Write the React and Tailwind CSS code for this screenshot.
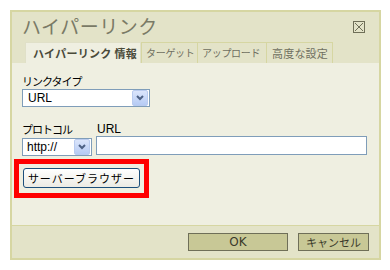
import React from "react";

const jp = { fontFamily: '"Noto Sans CJK JP", "Noto Sans", sans-serif' };

function Arrow() {
  return (
    <div className="w-[16px] h-[16px] rounded-[2px] border border-[#b9cbef] bg-gradient-to-b from-[#dbe5fb] to-[#b6cbf4] flex items-center justify-center">
      <svg width="8" height="6" viewBox="0 0 8 6">
        <path d="M1 1 L4 4 L7 1" stroke="#4d6185" strokeWidth="2" fill="none" />
      </svg>
    </div>
  );
}

export default function App() {
  return (
    <div className="w-[390px] h-[270px] bg-white pt-[10px] pl-[10px]" style={jp}>
      <div className="w-[371px] h-[250px] border-2 border-[#d6d6a2] bg-[#e3e3c8] flex flex-col">
        {/* header */}
        <div className="h-[30px] flex items-start justify-between pl-[10px] pr-[14px]">
          <div className="text-[19px] leading-none mt-[4px] text-[#7a7a66] tracking-[0.5px] whitespace-nowrap">ハイパーリンク</div>
          <div className="mt-[9px] w-[12px] h-[12px] border border-[#6f6f58] flex items-center justify-center">
            <svg width="10" height="10" viewBox="0 0 10 10">
              <path d="M1 1 L9 9 M9 1 L1 9" stroke="#6f6f58" strokeWidth="1" />
            </svg>
          </div>
        </div>
        {/* tabs */}
        <div className="h-[21px] flex items-end pl-[13px] text-[11px] leading-none whitespace-nowrap">
          <div className="flex-none h-[21px] w-[116px] bg-[#efefe1] border-l border-t border-r border-[#e0e0c8] flex items-center pl-[7px] font-bold text-[#4a4a3a] tracking-[0.3px]">
            ハイパーリンク 情報
          </div>
          <div className="flex-none h-[21px] w-[57px] border border-b-0 border-[#d6d6a2] flex items-center pl-[4px] text-[10px] text-[#6f6f60] tracking-[-0.3px]">ターゲット</div>
          <div className="flex-none h-[21px] w-[69px] border border-l-0 border-b-0 border-[#d6d6a2] flex items-center pl-[4px] text-[10px] text-[#6f6f60] tracking-[-0.3px]">アップロード</div>
          <div className="flex-none h-[21px] w-[66px] border border-l-0 border-b-0 border-[#d6d6a2] flex items-center pl-[5px] text-[11px] text-[#6f6f60] tracking-[0.2px]">高度な設定</div>
        </div>
        {/* content */}
        <div className="flex-1 bg-[#efefe1] border-b border-[#d6d6a2] pl-[10px] pt-[12px] text-black">
          <div className="text-[11px] leading-[13px] tracking-[-1px]">リンクタイプ</div>
          <div className="mt-[1px] w-[128px] h-[18px] bg-white border border-[#7f9db9] flex items-center justify-between pl-[5px] pr-[1px]">
            <span className="text-[12px] leading-none" style={{ fontFamily: '"Liberation Sans", sans-serif' }}>URL</span>
            <Arrow />
          </div>
          <div className="mt-[16px] flex gap-[4px]">
            <div className="flex flex-col">
              <div className="text-[11px] leading-[13px] tracking-[-1px] h-[14px]">プロトコル</div>
              <div className="mt-[1px] w-[70px] h-[18px] bg-white border border-[#7f9db9] flex items-center justify-between pl-[4px] pr-[1px]">
                <span className="text-[12px] leading-none" style={{ fontFamily: '"Liberation Sans", sans-serif' }}>http://</span>
                <Arrow />
              </div>
            </div>
            <div className="flex flex-col">
              <div className="text-[12px] leading-[13px] h-[13px] pl-[1px]" style={{ fontFamily: '"Liberation Sans", sans-serif' }}>URL</div>
              <div className="w-[271px] h-[19px] bg-white border border-[#7f9db9]"></div>
            </div>
          </div>
          <div className="mt-[3px] -ml-[8px] w-[135px] h-[39px] border-[5px] border-[#ff0000] pl-[4px] pt-[4px]">
            <div className="w-[117px] h-[20px] rounded-[3px] border border-[#1c4f7c] bg-gradient-to-b from-white to-[#ecebe4] flex items-center justify-center text-[11px] leading-none tracking-[1px] text-black whitespace-nowrap">
              サーバーブラウザー
            </div>
          </div>
        </div>
        {/* footer */}
        <div className="h-[32px] flex items-start justify-end pr-[10px] pt-[7px] gap-[10px] text-[12px] leading-none text-[#3a3a2a]">
          <div className="w-[100px] h-[18px] bg-[#c8c896] border border-[#6f6f58] flex items-center justify-center" style={{ fontFamily: '"DejaVu Sans", sans-serif' }}>OK</div>
          <div className="w-[71px] h-[18px] bg-[#c8c896] border border-[#6f6f58] flex items-center justify-center text-[11px]">キャンセル</div>
        </div>
      </div>
    </div>
  );
}
